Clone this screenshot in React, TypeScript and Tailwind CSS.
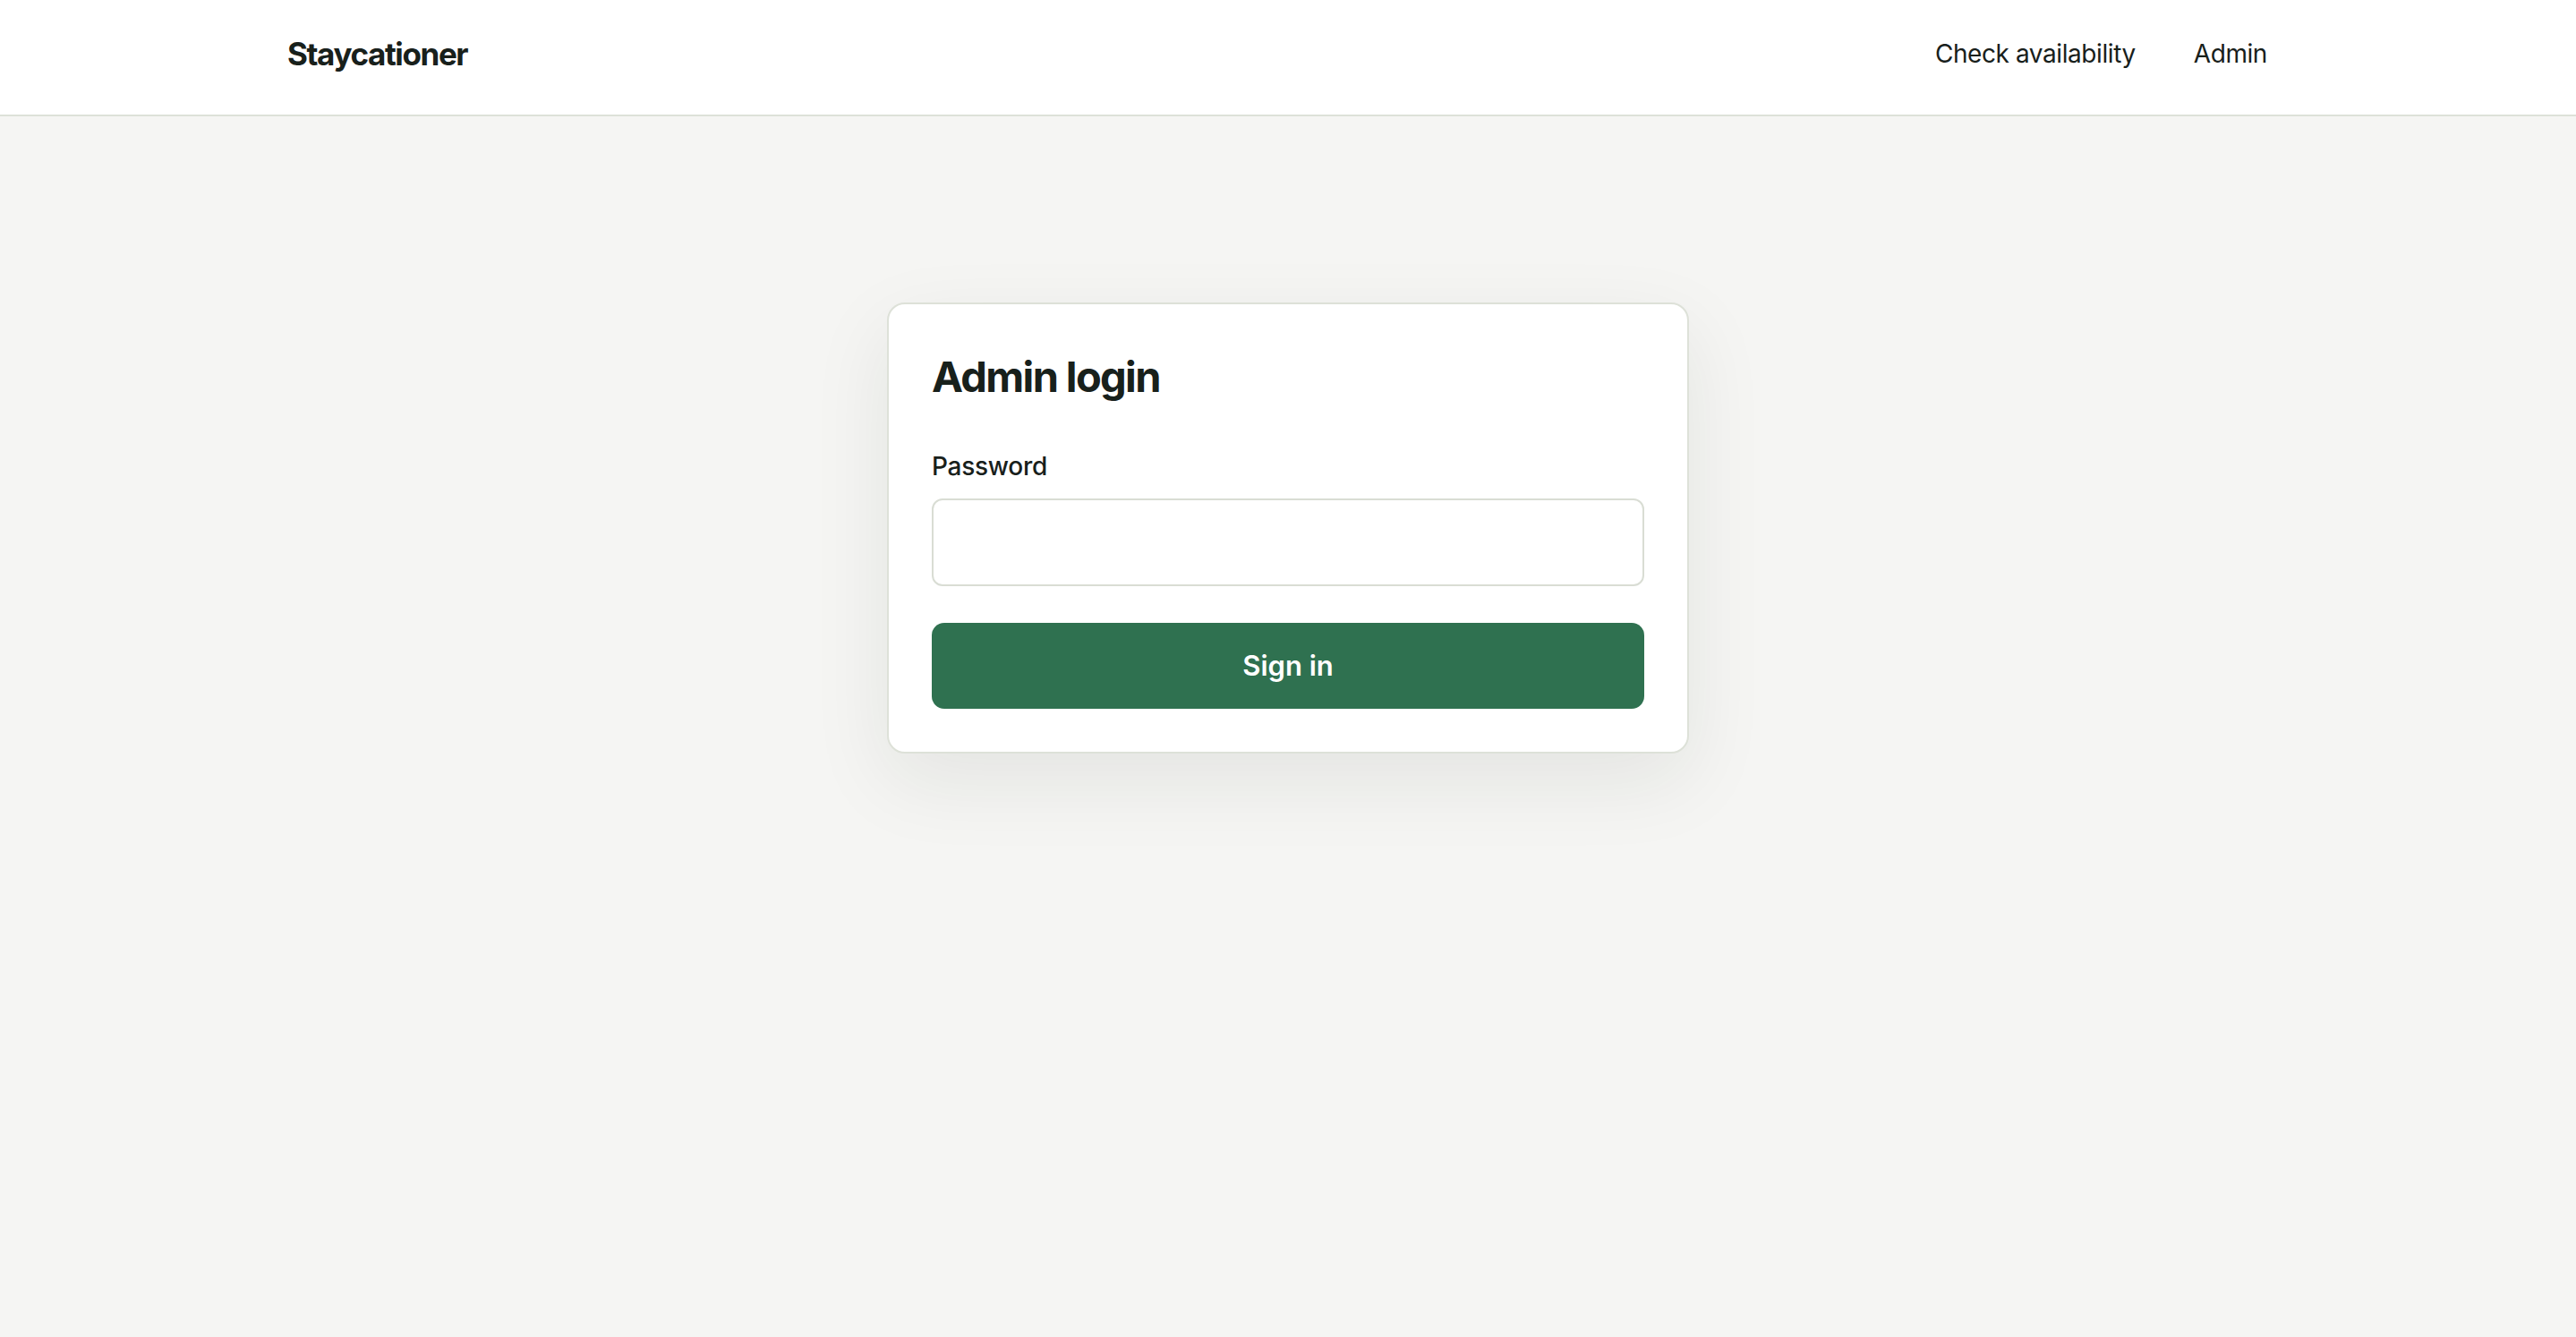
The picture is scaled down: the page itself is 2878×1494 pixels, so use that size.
import React from "react";

const App: React.FC = () => {
  return (
    <div className="min-h-screen bg-[#f5f5f3] font-['Inter','Noto_Sans',sans-serif] text-[#18201b]">
      <header className="h-[130px] pb-[8px] bg-white border-b-2 border-[#dde1d8]">
        <div className="mx-auto max-w-[2236px] h-full flex items-center justify-between">
          <a href="#" className="text-[35px] font-bold tracking-[-0.04em] leading-none">
            Staycationer
          </a>
          <nav className="flex items-center gap-[17px]">
            <a href="#" className="px-6 py-2 text-[28px] tracking-[-0.015em] leading-none">
              Check availability
            </a>
            <a href="#" className="px-6 py-2 text-[28px] tracking-[-0.015em] leading-none">
              Admin
            </a>
          </nav>
        </div>
      </header>

      <main className="flex justify-center pt-[208px]">
        <div className="w-[896px] bg-white border-2 border-[#dde1d8] rounded-[20px] pt-[52px] px-[48px] pb-[48px] shadow-[0_30px_90px_rgba(30,40,30,0.08)]">
          <h1 className="text-[47px] font-bold tracking-[-0.035em] leading-[58px]">
            Admin login
          </h1>
          <form className="mt-[50px] flex flex-col" onSubmit={(e) => e.preventDefault()}>
            <label htmlFor="password" className="text-[28px] font-medium tracking-[-0.01em] leading-[42px]">
              Password
            </label>
            <input
              id="password"
              type="password"
              className="mt-[15px] h-[98px] w-full rounded-[12px] border-2 border-[#d9ddd4] bg-white px-6 text-[30px] outline-none"
            />
            <button
              type="submit"
              className="mt-[41px] h-[96px] w-full rounded-[14px] bg-[#2f7150] text-white text-[31px] font-semibold"
            >
              Sign in
            </button>
          </form>
        </div>
      </main>
    </div>
  );
};

export default App;
